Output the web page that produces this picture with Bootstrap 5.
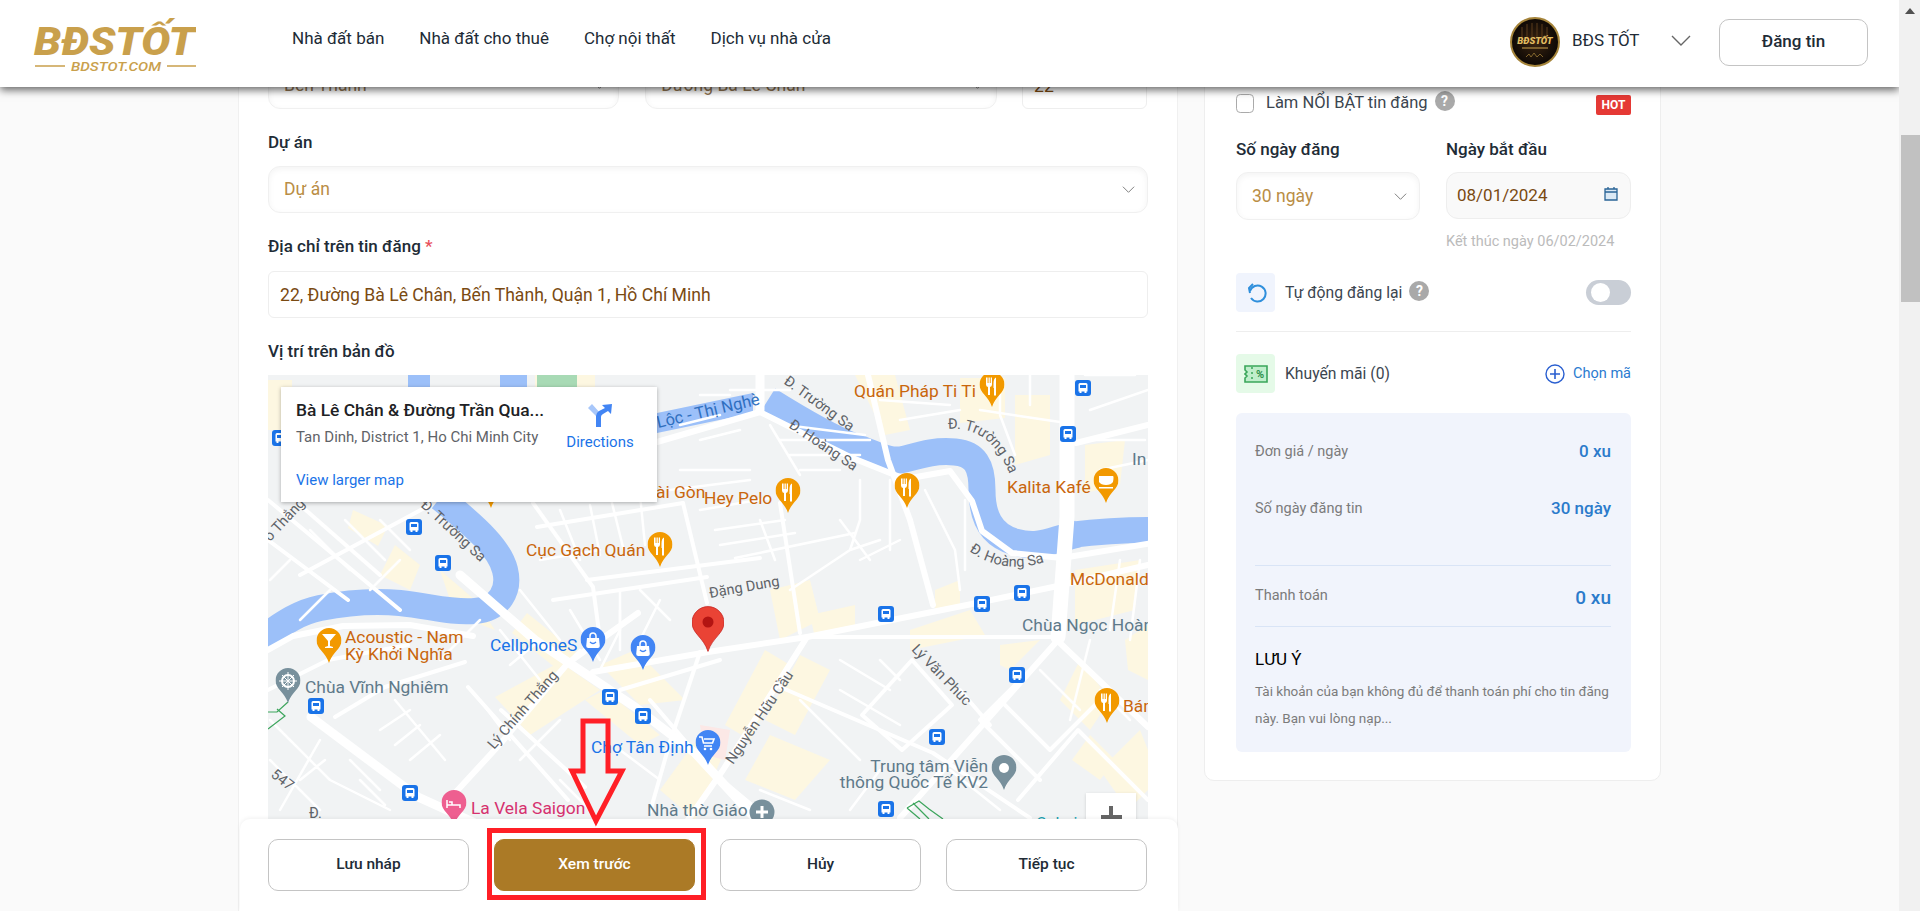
<!DOCTYPE html>
<html lang="vi">
<head>
<meta charset="UTF-8">
<title>Đăng tin - BĐS Tốt</title>
<link href="https://cdn.jsdelivr.net/npm/bootstrap@5.3.0/dist/css/bootstrap.min.css" rel="stylesheet">
<style>
html, body { height: 911px; overflow: hidden; }
body { font-family: Roboto, "Liberation Sans", sans-serif; background: #fafafa; color: #212b36; font-size: 17px; }
.shell { height: 911px; }
.viewport { width: 1899px; height: 911px; position: relative; overflow: hidden; }
.fake-scroll { width: 21px; background: #f1f1f1; position: relative; }
.fake-up { width: 0; height: 0; border: 5px solid transparent; border-top: 0; border-bottom: 6px solid #505050; position: absolute; left: 6px; top: 8px; }
.fake-thumb { position: absolute; left: 2px; right: 0; top: 135px; height: 167px; background: #c1c1c1; }

.topbar { height: 87px; padding: 0 31px 0 33px; position: relative; z-index: 3; box-shadow: 0 3px 8px rgba(0,0,0,.6); }
.brand-svg { width: 163px; height: 70px; display: block; margin-top: 2px; }
.top-menu { gap: 35px; margin: 0 0 10px 96px; }
.top-menu .nav-link { padding: 0; color: #212b36; font-size: 17px; }
.top-user { font-size: 17px; color: #212b36; margin-bottom: 3px; }
.avatar-svg { width: 50px; height: 50px; display: block; }
.user-name { margin-left: 12px; margin-bottom: 2px; width: 68px; white-space: nowrap; }
.user-caret { margin-left: 27px; margin-bottom: 4px; display: block; }
.btn-post { width: 149px; height: 47px; margin-left: 23px; border: 1px solid #c4c4c4; border-radius: 10px; font-weight: 500; color: #212b36; font-size: 17px; padding: 0; }

.content-area { padding-left: 238px; gap: 26px; margin-top: -26px; align-items: flex-start; }
.main-panel { width: 940px; background: #fff; border: 1px solid #f0f0f0; padding: 0 29px; height: 900px; }
.field-label { font-weight: 500; font-size: 17px; color: #212b36; margin-bottom: 0; line-height: 24px; white-space: nowrap; }
.req { color: #e8505b; }
.soft-select { height: 47px; border: 1px solid #f0f0f0; border-radius: 12px; color: #b98d45; font-size: 17.5px; padding-left: 15px;
  box-shadow: inset 0 2px 6px rgba(0,0,0,.05); background-image: url("data:image/svg+xml,%3csvg xmlns='http://www.w3.org/2000/svg' viewBox='0 0 16 16'%3e%3cpath fill='none' stroke='%23777' d='M2 5l6 6 6-6'/%3e%3c/svg%3e"); background-size: 15px 15px; background-position: right 11px center; }
.muted-select { color: #8f7350; }
.plain-input { height: 47px; border: 1px solid #eee; border-radius: 6px; color: #7a4a12; font-size: 17.6px; padding-left: 11px; }
.map-frame { height: 560px; position: relative; overflow: hidden; background: #f1f3f4; margin-top: 12px; }
.map-svg { width: 880px; height: 560px; display: block; }
.info-box { position: absolute; left: 13px; top: 12px; width: 376px; height: 115px; background: #fff; box-shadow: 0 1px 4px rgba(0,0,0,.3); padding: 11px 15px; }
.info-title { font-weight: 500; font-size: 17.4px; color: #202124; line-height: 24px; white-space: nowrap; }
.info-sub { font-size: 15px; color: #5f6368; line-height: 20px; margin-top: 5px; }
.info-link { font-size: 15px; color: #1a73e8; line-height: 20px; margin-top: 23px; }
.info-dir { position: absolute; left: 281px; top: 16px; width: 76px; text-align: center; font-size: 15px; color: #1a73e8; line-height: 18px; }
.info-dir svg { display: block; margin: 0 auto 6px; }
.zoom-box { position: absolute; left: 818px; top: 418px; width: 50px; height: 60px; background: #fff; box-shadow: 0 1px 3px rgba(0,0,0,.15); }
.zoom-box::before { content: ""; position: absolute; left: 15px; top: 22px; width: 21px; height: 4px; background: #666; }
.zoom-box::after { content: ""; position: absolute; left: 23px; top: 13px; width: 4px; height: 22px; background: #666; }

.action-bar { position: absolute; left: 240px; bottom: 0; width: 938px; height: 92px; background: #fff; border-radius: 10px 10px 0 0; padding: 20px 31px 20px 28px; gap: 25px; z-index: 2; box-shadow: 0 -1px 4px rgba(0,0,0,.06); }
.act-btn { flex: 1 1 0; height: 52px; border: 1px solid #c4c4c4; border-radius: 10px; background: #fff; color: #212b36; font-weight: 500; font-size: 15.5px; }
.act-main { background: #ab7a26; border-color: #ab7a26; color: #fff; }
.act-main:hover { background: #ab7a26; border-color: #ab7a26; color: #fff; }
.red-frame { position: absolute; left: 247px; top: 9px; width: 219px; height: 72px; border: 5px solid #ff1f26; pointer-events: none; }
.red-arrow { position: absolute; left: 560px; top: 710px; width: 80px; height: 120px; z-index: 4; }

.side-panel { width: 457px; background: #fff; border: 1px solid #eee; border-radius: 0 0 10px 10px; padding: 30px 29px 30px 31px; height: 720px; }
.side-text { font-size: 15.7px; color: #3c4650; white-space: nowrap; margin-left: 10px; }
.hot-text { font-size: 16.5px; margin-left: 12px; }
.tick-box { width: 18px; height: 19px; border: 1px solid #aaa; border-radius: 3px; margin: 0; }
.help-dot { width: 20px; height: 20px; border-radius: 50%; background: #a9a9a9; color: #fff; font-size: 14px; font-weight: 700; line-height: 20px; text-align: center; margin-left: 7px; margin-bottom: 4px; }
.hot-tag { width: 35px; height: 20px; background: #e53935; color: #fff; font-size: 12px; font-weight: 700; line-height: 20px; text-align: center; border-radius: 2px; margin-top: 3px; }
.date-box { height: 47px; background: #f9f9f9; border: 1px solid #eee; border-radius: 12px; color: #7a4a12; padding: 0 12px 0 10px; margin-top: 11px; }
.end-note { font-size: 14.5px; color: #bbb; line-height: 20px; margin-top: 13px; white-space: nowrap; }
.tile { width: 39px; height: 39px; border-radius: 4px; }
.tile-blue { background: #f0f4fd; }
.tile-green { background: #e5fae8; }
.fake-switch { width: 45px; height: 25px; border-radius: 13px; background: #c9ced6; position: relative; }
.fake-switch::after { content: ""; position: absolute; left: 5px; top: 3px; width: 19px; height: 19px; border-radius: 50%; background: #fff; }
.side-rule { border-top: 1px solid #eee; margin: 0; opacity: 1; }
.pick-code { font-size: 14.5px; color: #2a7bd0; }
.sum-box { height: 339px; background: #f1f4fc; border-radius: 6px; padding: 0 20px 0 19px; }
.sum-label { font-size: 14.5px; color: #7b7b7b; }
.sum-val { color: #2b7bcb; font-weight: 500; font-size: 17px; }
.sum-rule { border-top: 1px solid #d9e4f6; margin: 0; opacity: 1; }
.note-head { color: #000; font-size: 17px; line-height: 24px; }
.note-text { font-size: 13.5px; color: #7b7b7b; line-height: 27px; }

.m-road { fill: none; stroke: #fff; stroke-linecap: round; stroke-linejoin: round; }
.m-canal { fill: none; stroke: #9cc0f9; }
.m-st { font: 400 14.5px Roboto, sans-serif; fill: #5f6368; }
.m-food { font: 400 17.4px Roboto, sans-serif; fill: #c9660c; }
.m-blue { font: 400 17.4px Roboto, sans-serif; fill: #1a73e8; }
.m-grey { font: 400 17.4px Roboto, sans-serif; fill: #5f7a8a; }
</style>
</head>
<body>
<div class="shell d-flex">
  <div class="viewport">
    <header class="topbar navbar navbar-expand bg-white d-flex align-items-center flex-nowrap">
      <svg class="brand-svg" viewBox="0 0 163 70">
        <text x="1" y="45" font-family="Roboto, sans-serif" font-weight="900" font-style="italic" font-size="38" fill="#c9a04c" textLength="161" lengthAdjust="spacingAndGlyphs">BĐSTỐT</text>
        <path d="M2 56h30M134 56h29" stroke="#c9a04c" stroke-width="1.5"/>
        <text x="38" y="61" font-family="Roboto, sans-serif" font-weight="500" font-style="italic" font-size="13" fill="#c9a04c" textLength="90" lengthAdjust="spacingAndGlyphs">BDSTOT.COM</text>
      </svg>
      <nav class="nav top-menu flex-nowrap">
        <a class="nav-link" href="#">Nhà đất bán</a>
        <a class="nav-link" href="#">Nhà đất cho thuê</a>
        <a class="nav-link" href="#">Chợ nội thất</a>
        <a class="nav-link" href="#">Dịch vụ nhà cửa</a>
      </nav>
      <div class="ms-auto d-flex align-items-center top-user">
        <svg class="avatar-svg" viewBox="0 0 50 50">
          <defs><radialGradient id="av"><stop offset="0" stop-color="#3a2410"/><stop offset="1" stop-color="#0d0805"/></radialGradient></defs>
          <circle cx="25" cy="25" r="24" fill="url(#av)" stroke="#a5843a" stroke-width="2"/>
          <path d="M12 10v12M17 7v15M22 6v16M27 6v16M32 7v15M37 10v12" stroke="#5a3c1c" stroke-width="1"/>
          <text x="25" y="27" text-anchor="middle" font-family="Roboto, sans-serif" font-weight="900" font-style="italic" font-size="9.500" fill="#e2bd62">BĐSTỐT</text>
          <path d="M12 31h26" stroke="#c9a04c" stroke-width="1"/>
          <path d="M16 40l3-3 2 3 3-4 3 4 3-3 3 3" fill="none" stroke="#9a7a35" stroke-width=".8"/>
        </svg>
        <span class="user-name">BĐS TỐT</span>
        <svg class="user-caret" width="29" height="18" viewBox="0 0 29 18"><path d="M5 5l9 9 9-9" fill="none" stroke="#666" stroke-width="1.400"/></svg>
        <button class="btn btn-post" type="button">Đăng tin</button>
      </div>
    </header>

    <main class="content-area d-flex">
      <section class="main-panel">
        <div class="d-flex">
          <select class="form-select soft-select muted-select flex-shrink-0" style="width:351px"><option>Bến Thành</option></select>
          <select class="form-select soft-select muted-select flex-shrink-0" style="width:352px;margin-left:26px"><option>Đường Bà Lê Chân</option></select>
          <input class="form-control plain-input muted-select flex-shrink-0" style="width:125px;margin-left:25px" value="22">
        </div>
        <label class="field-label d-block" style="margin-top:21px">Dự án</label>
        <select class="form-select soft-select" style="margin-top:12px"><option>Dự án</option></select>
        <label class="field-label d-block" style="margin-top:21px">Địa chỉ trên tin đăng <span class="req">*</span></label>
        <input class="form-control plain-input" style="margin-top:13px" value="22, Đường Bà Lê Chân, Bến Thành, Quận 1, Hồ Chí Minh">
        <label class="field-label d-block" style="margin-top:21px">Vị trí trên bản đồ</label>
        <div class="map-frame">
          <svg class="map-svg" viewBox="268 375 880 560">
            <defs>
              <symbol id="bus" viewBox="0 0 16 16"><rect width="16" height="16" rx="3" fill="#1a73e8"/><path d="M3.500 4.500q0-1.500 1.500-1.500h6q1.500 0 1.500 1.500v7h-1v1.500h-2v-1.500h-3v1.500h-2v-1.500h-1z" fill="#fff"/><path d="M5 5h6v3H5z" fill="#1a73e8"/></symbol>
              <symbol id="pin" viewBox="0 0 25 35"><path d="M12.500 0C5.600 0 0 5.600 0 12.500 0 21 9 24 12.500 35 16 24 25 21 25 12.500 25 5.600 19.400 0 12.500 0z"/></symbol>
              <symbol id="fork" viewBox="0 0 25 35"><path d="M6.500 5.500v7q0 2 2 2.500v8h2v-8q2-.5 2-2.500v-7h-1.300v5.500h-.9V5.500H9v5.500h-.9V5.500zM14.500 23.500h2V5.500q-2.500 1-2.500 6v4.500h.5z" fill="#fff"/></symbol>
              <symbol id="bag" viewBox="0 0 25 35"><path d="M6.500 11h12l.8 8q0 2-2 2H7.700q-2 0-2-2z" fill="#fff"/><path d="M9.500 11V9a3 3 0 0 1 6 0v2" fill="none" stroke="#fff" stroke-width="1.500"/><path d="M9.500 15q3 3 6 0" fill="none" stroke="#4285f4" stroke-width="1.300"/></symbol>
            </defs>
            <rect x="268" y="375" width="880" height="560" fill="#f1f3f4"/>

            <!-- khu vàng -->
            <g fill="#fdf7e1">
              <path d="M268 380h24v50h-24zM353 510l35 16-10 20-30-18zM395 545l25 20-10 25-30-15zM440 570l35 30 20 30-40-15z"/>
              <path d="M527 613l50 40-15 20-50-40zM495 697l65-35 40 28-70 45zM585 700l55 45 20-10-55-45zM600 665l40 40 45-5-50-50z"/>
              <path d="M535 375h60v12h-60zM855 375l40 0 15 55-25 5zM960 378l45 0 0 40-45 5zM1015 395l35 0 0 60-35 10zM1085 445l40-5-5 45-35 8z"/>
              <path d="M770 590l40-10 10 40-40 20zM810 615l45-10 0 25-40 8zM910 630l60-20 15 25-75 15zM935 590l25-10 0 25-25 8zM1000 645l40-5-30 30-10-5zM1075 570l65-10-5 50-60 15z"/>
              <path d="M765 650l25 15-40 75-25-15zM800 655l30 15-35 65-30-15zM770 735l60 25-35 40-50-20zM1080 660l30 40-20 30-30-30zM1100 770l40-40 8 20v40l-20 20zM1090 735l25 25-15 20-28-20zM1125 640l23-15v55l-20-10z"/>
              <path d="M660 790l40-55 25 15-30 70z"/>
            </g>
            <path d="M700 725l30 5-5 30-20-5z" fill="#fce8e6"/>

            <!-- kênh -->
            <g fill="#9cc0f9">
              <path d="M408 375h22v12h-22zM500 375h27v12h-27zM657 413l96-20v20l-96 20z"/>
            </g>
            <path class="m-canal" stroke-width="27" d="M768 400C800 420 830 438 855 447S890 463 905 459 935 450 955 452 982 465 982 490 990 535 1015 542 1050 540 1078 534"/>
            <path class="m-canal" stroke-width="26" d="M1070 535C1095 532 1120 530 1148 530"/>
            <path class="m-canal" stroke-width="26" d="M262 638C285 622 300 612 320 608S370 600 400 603 450 613 475 611 510 590 505 570 480 530 440 498"/>
            <path d="M537 375h40v12h-40z" fill="#a8dab5"/>

            <!-- đường lớn -->
            <g class="m-road" stroke-width="15">
              <path d="M1067 370v147l-9 120"/>
            </g>
            <g class="m-road" stroke-width="9">
              <path d="M460 575l75 65 100 67 60 46 60 65"/>
              <path d="M760 375v35"/>
              <path d="M311 717l107 80 55 25"/>
            </g>
            <g class="m-road" stroke-width="6">
              <path d="M593 672l115-20 99-15 170-34 76-16 95-22"/>
              <path d="M1058 640l-158 178"/>
              <path d="M1060 643l88 84"/>
              <path d="M868 375l20 85 22 60 23 85"/>
              <path d="M657 442l103-30 90 45 55 22 45-8 22 30 10 30 30 22 50 5 90-15"/>
              <path d="M1076 443l72-18"/>
              <path d="M268 650l25-14 50-10 67-1 63 11"/>
              <path d="M455 793l46-50 67-80 70-50"/>
              <path d="M807 637l-84 133-42 60"/>
            </g>
            <g class="m-road" stroke-width="4">
              <path d="M780 687l153 66 97 65"/>
              <path d="M807 637h246"/>
              <path d="M780 503l20 130"/>
              <path d="M533 503l60 84 8 60"/>
              <path d="M683 503l24 100"/>
              <path d="M537 527l146-24"/>
              <path d="M553 600l154-23"/>
              <path d="M587 580l173-22"/>
              <path d="M268 500l132 110"/>
              <path d="M268 540l80 60"/>
              <path d="M300 505l80 70"/>
              <path d="M430 505l-130 70"/>
              <path d="M268 690l60-30 80-15"/>
              <path d="M468 687l100 113"/>
              <path d="M501 710l84 77"/>
              <path d="M335 717l50-30 80-25"/>
              <path d="M650 700l60 70 60 50"/>
              <path d="M720 660l-100 30"/>
              <path d="M700 652l-30 90-20 70"/>
              <path d="M912 660l-50 55 40 35 50-45zM960 690l30 35"/>
              <path d="M1000 700l50 50 60-60"/>
              <path d="M1040 780l-60-60 40-40"/>
              <path d="M1148 800l-70-70-60 70"/>
            </g>
            <g class="m-road" stroke-width="2.500">
              <path d="M780 440h90M790 455h70M800 470h40M785 425l80 10M770 425l30 50"/>
              <path d="M700 510l70-12M715 530l70-10M720 545l75-12M735 558l120-25M760 520l15 40"/>
              <path d="M790 590l60-40 30-10M860 480v40l-10 30M890 480v70M925 490l30 60 5 40M965 500v70M840 520l30 40M900 540l-40 20"/>
              <path d="M1000 375v40l15 40M1030 375v30M1085 375h50M1090 410l58-20M1085 440h60M980 410l80 12M1100 470l48-10M900 420l60-10M880 400l70 5"/>
              <path d="M730 390h60M700 395h30M680 470h70M670 490l80-10M680 425l40-10M700 440l40-10"/>
              <path d="M560 510l20 50M610 495l15 60M640 495l5 50M590 505l10 50M540 560l60-10M620 590v40"/>
              <path d="M520 590l40 50M570 610l30 50M500 630l40 50M620 610l0 40M640 590l30 30M660 600l-20 40"/>
              <path d="M290 560l-20 20M330 590l-30 30M440 660l40-40M400 560l-30 30M310 530l40 40M345 520l40 40M380 520l30 30"/>
              <path d="M270 720l60 60 60 30M270 760l50 50M320 740l-40 70M395 700l50 60M380 730l30-20M395 745l25-20M410 760l30-25M350 760l30 30M300 780l25-20M360 780l25 25"/>
              <path d="M480 700l30 40M520 760l40-40M560 780l30 30M620 750l40 30M540 640l-30 25M580 650l-30 30M620 630l-20 40"/>
              <path d="M840 690l60 35M800 700l60 60M880 770l-30 40M950 770l50 40M760 790l50 20M840 660l50 30M880 660l20 20"/>
              <path d="M1090 640l-20 80M1120 560l-10 70M1140 560l-10 80M1040 670l40 40M1100 690l30 30"/>
            </g>

            <!-- chữ đường -->
            <text class="m-st" transform="translate(783 383) rotate(36)">Đ. Trường Sa</text>
            <text class="m-st" transform="translate(788 427) rotate(34)">Đ. Hoàng Sa</text>
            <path id="p1" d="M948 429Q990 425 1010 475" fill="none"/>
            <text class="m-st"><textPath href="#p1">Đ. Trường Sa</textPath></text>
            <path id="p2" d="M969 551Q1005 577 1050 560" fill="none"/>
            <text class="m-st"><textPath href="#p2">Đ. Hoàng Sa</textPath></text>
            <text class="m-st" transform="translate(710 598) rotate(-10)">Đặng Dung</text>
            <text class="m-st" transform="translate(911 650) rotate(46)">Lý Văn Phúc</text>
            <text class="m-st" transform="translate(733 765) rotate(-56)">Nguyễn Hữu Cầu</text>
            <text class="m-st" transform="translate(494 750) rotate(-49)">Lý Chính Thắng</text>
            <text class="m-st" transform="translate(420 506) rotate(43)">Đ. Trường Sa</text>
            <text class="m-st" transform="translate(270 542) rotate(-47)">o Thắng</text>
            <text class="m-st" transform="translate(270 776) rotate(38)">547</text>
            <text class="m-st" x="309" y="818">Đ.</text>
            <text font-family="Roboto, sans-serif" font-size="16.500" fill="#2f6fc0" transform="translate(658 428) rotate(-13)">Lộc - Thị Nghè</text>

            <!-- điểm xe buýt -->
            <g>
              <use href="#bus" x="1075" y="380" width="16" height="16"/><use href="#bus" x="1060" y="426" width="16" height="16"/>
              <use href="#bus" x="1014" y="585" width="16" height="16"/><use href="#bus" x="974" y="596" width="16" height="16"/>
              <use href="#bus" x="878" y="606" width="16" height="16"/><use href="#bus" x="1009" y="667" width="16" height="16"/>
              <use href="#bus" x="929" y="729" width="16" height="16"/><use href="#bus" x="878" y="801" width="16" height="16"/>
              <use href="#bus" x="406" y="519" width="16" height="16"/><use href="#bus" x="435" y="555" width="16" height="16"/>
              <use href="#bus" x="602" y="689" width="16" height="16"/><use href="#bus" x="635" y="708" width="16" height="16"/>
              <use href="#bus" x="308" y="698" width="16" height="16"/><use href="#bus" x="402" y="785" width="16" height="16"/>
              <use href="#bus" x="272" y="430" width="16" height="16"/>
            </g>
            <path d="M288 702l-11 10h-9M277 709l8 7-17 13" fill="none" stroke="#3ca55c" stroke-width="1.200"/>
            <path d="M907 808l12-7 10 8 14 10M913 803l16 16M920 819l-13-11" fill="none" stroke="#3ca55c" stroke-width="1.200"/>

            <!-- ghim -->
            <g fill="#f29900">
              <use href="#pin" x="979.500" y="372" width="25" height="35"/><use href="#fork" x="979.500" y="372" width="25" height="35"/>
              <use href="#pin" x="775.500" y="478" width="25" height="35"/><use href="#fork" x="775.500" y="478" width="25" height="35"/>
              <use href="#pin" x="894.500" y="473" width="25" height="35"/><use href="#fork" x="894.500" y="473" width="25" height="35"/>
              <use href="#pin" x="1093.500" y="468" width="25" height="35"/>
              <path d="M1099 476h14q1 0 0 6-2 3-7 3t-7-3zM1099 487h14v1.500h-14z" fill="#fff"/>
              <use href="#pin" x="1094.500" y="688" width="25" height="35"/><use href="#fork" x="1094.500" y="688" width="25" height="35"/>
              <use href="#pin" x="647.500" y="532" width="25" height="35"/><use href="#fork" x="647.500" y="532" width="25" height="35"/>
              <use href="#pin" x="316.500" y="628" width="25" height="35"/>
              <path d="M322 634h14l-6 7v5l3 1v1h-8v-1l3-1v-5z" fill="#fff"/>
              <use href="#pin" x="478.500" y="473" width="25" height="35"/>
            </g>
            <g fill="#4285f4">
              <use href="#pin" x="580.500" y="627" width="25" height="35"/><use href="#bag" x="580.500" y="627" width="25" height="35"/>
              <use href="#pin" x="630.500" y="635" width="25" height="35"/><use href="#bag" x="630.500" y="635" width="25" height="35"/>
              <use href="#pin" x="695.500" y="730" width="25" height="35"/>
              <path d="M699 737h3l1.500 6h9l1.500-4h-10M704 746h8" fill="none" stroke="#fff" stroke-width="1.600"/>
              <circle cx="705" cy="749" r="1.300" fill="#fff"/><circle cx="711" cy="749" r="1.300" fill="#fff"/>
            </g>
            <g fill="#78909c">
              <use href="#pin" x="275.500" y="668" width="25" height="35"/>
              <circle cx="288" cy="681" r="6" fill="none" stroke="#fff" stroke-width="2"/>
              <path d="M288 672v18M279 681h18M282 675l12 12M294 675l-12 12" stroke="#fff"/>
              <use href="#pin" x="991.500" y="755" width="25" height="35"/><circle cx="1004" cy="768" r="5" fill="#fff"/>
              <circle cx="762" cy="812" r="12.500"/><path d="M762 806v12M756 812h12" stroke="#fff" stroke-width="3"/>
            </g>
            <use href="#pin" x="441.500" y="790" width="25" height="35" fill="#ee5f90"/>
            <path d="M447 800v8M447 805h13v3M449 802h3v3h8" fill="none" stroke="#fff" stroke-width="1.500"/>
            <use href="#pin" x="692" y="606" width="32" height="46" fill="#ea4335" stroke="#c5221f" stroke-width=".6"/>
            <circle cx="708" cy="622" r="5.500" fill="#b31412"/>

            <!-- tên địa điểm -->
            <text class="m-food" x="854" y="397">Quán Pháp Ti Ti</text>
            <text class="m-food" x="704" y="504">Hey Pelo</text>
            <text class="m-food" x="656" y="498">ài Gòn</text>
            <text class="m-food" x="526" y="556">Cục Gạch Quán</text>
            <text class="m-food" x="1007" y="493">Kalita Kafé</text>
            <text class="m-food" x="1070" y="585">McDonald</text>
            <text class="m-food" x="1123" y="712">Bán</text>
            <text class="m-food" x="345" y="643">Acoustic - Nam</text>
            <text class="m-food" x="345" y="660">Kỳ Khởi Nghĩa</text>
            <text class="m-grey" x="1022" y="631">Chùa Ngọc Hoàn</text>
            <text class="m-grey" x="988" y="772" text-anchor="end">Trung tâm Viễn</text>
            <text class="m-grey" x="988" y="788" text-anchor="end">thông Quốc Tế KV2</text>
            <text class="m-grey" x="647" y="816">Nhà thờ Giáo</text>
            <text class="m-grey" x="305" y="693">Chùa Vĩnh Nghiêm</text>
            <text class="m-grey" x="1132" y="465">In</text>
            <text class="m-blue" x="591" y="753">Chợ Tân Định</text>
            <text class="m-blue" x="490" y="651">CellphoneS</text>
            <text font-family="Roboto, sans-serif" font-size="17.400" fill="#d6316f" x="471" y="814">La Vela Saigon</text>
            <text font-family="Roboto, sans-serif" font-size="16" fill="#129eaf" x="1036" y="829">Galeria</text>
          </svg>
          <div class="info-box">
            <div class="info-title">Bà Lê Chân &amp; Đường Trần Qua...</div>
            <div class="info-sub">Tan Dinh, District 1, Ho Chi Minh City</div>
            <div class="info-link">View larger map</div>
            <div class="info-dir">
              <svg width="24" height="24" viewBox="0 0 24 24"><path d="M0 5l4-4 9 10v13H8V13z" fill="#a8c7fa"/><path d="M8 24V13q0-3 3-5l6-3-3-3 10-1-1 10-3-3-5 3q-2 1-2 3v13z" fill="#4285f4"/></svg>
              Directions
            </div>
          </div>
          <div class="zoom-box"></div>
        </div>
      </section>

      <aside class="side-panel">
        <div class="d-flex align-items-center" style="height:22px">
          <input class="form-check-input tick-box" type="checkbox">
          <span class="side-text hot-text">Làm NỔI BẬT tin đăng</span>
          <span class="help-dot">?</span>
          <span class="hot-tag ms-auto">HOT</span>
        </div>
        <div class="d-flex" style="margin-top:23px">
          <div style="width:184px">
            <label class="field-label d-block">Số ngày đăng</label>
            <select class="form-select soft-select" style="height:48px;margin-top:11px"><option>30 ngày</option></select>
          </div>
          <div style="width:185px;margin-left:26px">
            <label class="field-label d-block">Ngày bắt đầu</label>
            <div class="date-box d-flex align-items-center justify-content-between">
              <span>08/01/2024</span>
              <svg class="mb-1" width="14" height="15" viewBox="0 0 14 15"><path d="M1 3h12v11H1z" fill="#dbe9f5" stroke="#2a6496" stroke-width="1.300"/><path d="M1 6h12M4 1v2M10 1v2" stroke="#2a6496" stroke-width="1.300"/></svg>
            </div>
            <div class="end-note">Kết thúc ngày 06/02/2024</div>
          </div>
        </div>
        <div class="d-flex align-items-center" style="margin-top:21px">
          <span class="tile tile-blue d-flex align-items-center justify-content-center">
            <svg width="22" height="22" viewBox="0 0 22 22"><path d="M5 9a8 8 0 1 1 1 7" fill="none" stroke="#2f8fdc" stroke-width="2"/><path d="M8 2L4 6l1 5" fill="none" stroke="#2f8fdc" stroke-width="2"/></svg>
          </span>
          <span class="side-text">Tự động đăng lại</span>
          <span class="help-dot">?</span>
          <span class="fake-switch ms-auto"></span>
        </div>
        <hr class="side-rule" style="margin-top:19px">
        <div class="d-flex align-items-center" style="margin-top:22px">
          <span class="tile tile-green d-flex align-items-center justify-content-center">
            <svg width="24" height="20" viewBox="0 0 24 20"><path d="M1 2h22v16H1v-4l2-2-2-2 2-2-2-2z" fill="#bfeecb" stroke="#3aa65a" stroke-width="1.600"/><path d="M8 3v2M8 8v2M8 13v2" stroke="#3aa65a" stroke-width="1.500"/><text x="16" y="14" text-anchor="middle" font-family="Roboto, sans-serif" font-size="11" font-weight="700" fill="#2d8f4a">%</text></svg>
          </span>
          <span class="side-text">Khuyến mãi (0)</span>
          <span class="ms-auto d-flex align-items-center pick-code">
            <svg class="me-2" width="20" height="20" viewBox="0 0 20 20"><circle cx="10" cy="10" r="9" fill="none" stroke="#2a5fd0" stroke-width="1.400"/><path d="M10 5v10M5 10h10" stroke="#2a5fd0" stroke-width="1.600"/></svg>
            Chọn mã
          </span>
        </div>
        <div class="sum-box" style="margin-top:20px">
          <div class="d-flex justify-content-between align-items-center" style="padding-top:27px;height:51px"><span class="sum-label">Đơn giá / ngày</span><span class="sum-val">0 xu</span></div>
          <div class="d-flex justify-content-between align-items-center" style="margin-top:33px;height:24px"><span class="sum-label">Số ngày đăng tin</span><span class="sum-val">30 ngày</span></div>
          <hr class="sum-rule" style="margin-top:44px">
          <div class="d-flex justify-content-between align-items-center" style="margin-top:19px;height:26px"><span class="sum-label mb-1">Thanh toán</span><span class="sum-val" style="font-size:19px">0 xu</span></div>
          <hr class="sum-rule" style="margin-top:15px">
          <div class="note-head" style="margin-top:20px">LƯU Ý</div>
          <div class="note-text" style="margin-top:7px">Tài khoản của bạn không đủ để thanh toán phí cho tin đăng này. Bạn vui lòng nạp...</div>
        </div>
      </aside>
    </main>

    <div class="action-bar d-flex">
      <button class="btn act-btn" type="button">Lưu nháp</button>
      <button class="btn act-btn act-main" type="button">Xem trước</button>
      <button class="btn act-btn" type="button">Hủy</button>
      <button class="btn act-btn" type="button">Tiếp tục</button>
      <div class="red-frame"></div>
    </div>
    <svg class="red-arrow" viewBox="560 710 80 120"><path d="M583 721h25v50h14l-26 50-24-50h11z" fill="none" stroke="#ff1f26" stroke-width="5"/></svg>
  </div>
  <div class="fake-scroll"><span class="fake-up"></span><span class="fake-thumb"></span></div>
</div>
<script src="https://cdn.jsdelivr.net/npm/bootstrap@5.3.0/dist/js/bootstrap.bundle.min.js"></script>
</body>
</html>
